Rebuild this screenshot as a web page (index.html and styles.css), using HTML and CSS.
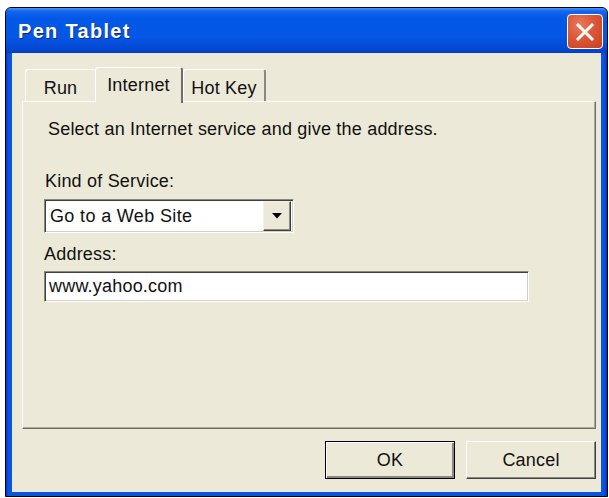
FILE: index.html
```html
<!DOCTYPE html>
<html>
<head>
<meta charset="utf-8">
<link rel="stylesheet" href="styles.css">
</head>
<body>
<div class="window">
  <div class="titlebar">
    <span class="title">Pen Tablet</span>
    <div class="close">
      <svg width="20" height="20" viewBox="0 0 20 20"><path d="M3 3 L17 17 M17 3 L3 17" stroke="#fff" stroke-width="3" stroke-linecap="square"/></svg>
    </div>
  </div>
  <div class="client">
    <div class="tabs">
      <div class="tab tab-run">Run</div>
      <div class="tab tab-active">Internet</div>
      <div class="tab tab-hot">Hot Key</div>
    </div>
    <div class="panel">
      <div class="intro">Select an Internet service and give the address.</div>
      <div class="label label-kind">Kind of Service:</div>
      <div class="combo">
        <span class="combo-text">Go to a Web Site</span>
        <span class="drop"><svg width="10" height="6" viewBox="0 0 10 6"><path d="M0 0 H10 L5 5.5 Z" fill="#000"/></svg></span>
      </div>
      <div class="label label-addr">Address:</div>
      <div class="input">www.yahoo.com</div>
    </div>
    <div class="buttons">
      <div class="btn btn-default">OK</div>
      <div class="btn">Cancel</div>
    </div>
  </div>
</div>
</body>
</html>
```
FILE: styles.css
```css
html, body {
  margin: 0;
  padding: 0;
  background: #fff;
}
body {
  font-family: "Liberation Sans", Arial, sans-serif;
  font-size: 18px;
  letter-spacing: 0.2px;
  color: #111;
}
.window {
  margin: 7px 0 0 5px;
  width: 603px;
  height: 490px;
  box-sizing: border-box;
  border: 1px solid #000;
  background: linear-gradient(to right, #0838c8 0, #0a55e0 3px, #0a55e0 calc(100% - 3px), #0830c0 100%);
  display: flex;
  flex-direction: column;
  border-radius: 6px 6px 0 0;
  overflow: hidden;
}
.titlebar {
  height: 45px;
  flex: none;
  display: flex;
  align-items: center;
  justify-content: space-between;
  padding: 0 4px 0 12px;
  background: linear-gradient(to bottom, #4a96f8 0, #1466ee 3px, #0358e6 10px, #0556e4 30px, #0448d2 40px, #0340c6 45px);
}
.title {
  color: #fff;
  font-weight: bold;
  font-size: 20px;
  letter-spacing: 1.3px;
  text-shadow: 1px 1px 0 #0a2a8a;
  margin-top: 1px;
}
.close {
  width: 36px;
  height: 35px;
  box-sizing: border-box;
  border: 1px solid #fff;
  border-radius: 4px;
  background: radial-gradient(circle at 35% 30%, #ea7b5e 0, #dd5a3a 40%, #c83e1e 100%);
  display: flex;
  align-items: center;
  justify-content: center;
  margin-top: 2px;
}
.client {
  flex: 1;
  margin: 0 6px 4px 6px;
  background: #ece9d8;
  padding: 14px 5px 0 10px;
  display: flex;
  flex-direction: column;
}
.tabs {
  display: flex;
  align-items: flex-end;
  height: 34px;
  padding-left: 3px;
  position: relative;
  z-index: 1;
}
.tab {
  box-sizing: border-box;
  height: 32px;
  border-top: 1px solid #fff;
  border-left: 1px solid #fff;
  border-right: 2px solid #8a887e;
  border-radius: 3px 3px 0 0;
  background: #ece9d8;
  display: flex;
  align-items: center;
  justify-content: center;
  padding-top: 5px;
}
.tab-run {
  width: 70px;
  border-right: none;
}
.tab-active {
  width: 88px;
  height: 36px;
  margin-bottom: -2px;
  padding-top: 2px;
  padding-bottom: 2px;
  border-right-color: #6f6d64;
}
.tab-hot {
  width: 83px;
}
.panel {
  box-sizing: border-box;
  height: 328px;
  border-top: 1px solid #fff;
  border-left: 1px solid #fff;
  border-right: 1px solid #716f64;
  border-bottom: 1px solid #716f64;
  box-shadow: inset -1px -1px 0 #aca899;
  padding: 17px 0 0 21px;
  display: flex;
  flex-direction: column;
  align-items: flex-start;
  line-height: 21px;
}
.intro {
  padding-left: 4px;
}
.label-kind {
  margin-top: 31px;
  padding-left: 1px;
}
.combo {
  margin-top: 7px;
  width: 250px;
  height: 34px;
  box-sizing: border-box;
  border-top: 1px solid #8a887e;
  border-left: 1px solid #8a887e;
  border-right: 1px solid #fff;
  border-bottom: 1px solid #fff;
  box-shadow: inset 1px 1px 0 #404040, inset -1px -1px 0 #d4d0c8;
  background: #fff;
  display: flex;
  align-items: center;
  justify-content: space-between;
  padding: 2px 2px 2px 5px;
}
.combo-text {
  margin-top: 1px;
  letter-spacing: 0.35px;
}
.drop {
  width: 28px;
  height: 30px;
  box-sizing: border-box;
  background: #ece9d8;
  border-top: 1px solid #f4f2e8;
  border-left: 1px solid #f4f2e8;
  border-right: 1px solid #404040;
  border-bottom: 1px solid #404040;
  box-shadow: inset -1px -1px 0 #8a887e;
  display: flex;
  align-items: center;
  justify-content: center;
}
.label-addr {
  margin-top: 11px;
}
.input {
  margin-top: 6px;
  width: 485px;
  height: 31px;
  box-sizing: border-box;
  border-top: 1px solid #8a887e;
  border-left: 1px solid #8a887e;
  border-right: 1px solid #fff;
  border-bottom: 1px solid #fff;
  box-shadow: inset 1px 1px 0 #404040, inset -1px -1px 0 #d4d0c8;
  background: #fff;
  padding: 4px 0 0 4px;
}
.buttons {
  display: flex;
  justify-content: flex-end;
  gap: 11px;
  margin-top: 12px;
}
.btn {
  width: 130px;
  height: 38px;
  box-sizing: border-box;
  background: #ece9d8;
  border-top: 1px solid #fff;
  border-left: 1px solid #fff;
  border-right: 1px solid #404040;
  border-bottom: 1px solid #404040;
  box-shadow: inset -1px -1px 0 #8a887e;
  display: flex;
  align-items: center;
  justify-content: center;
}
.btn-default {
  border: 1px solid #000;
  box-shadow: inset 1px 1px 0 #fff, inset -2px -2px 0 #8a887e;
}
```
